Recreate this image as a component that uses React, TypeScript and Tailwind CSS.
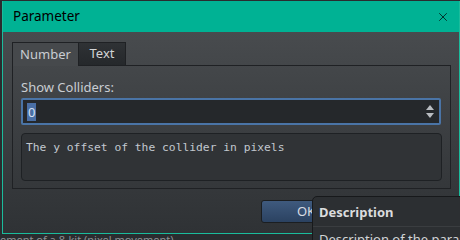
import { X } from 'lucide-react'

const ui = { fontFamily: '"Noto Sans", "Open Sans", sans-serif' }
const mono = { fontFamily: '"DejaVu Sans Mono", "Liberation Mono", monospace' }

export default function App() {
  return (
    <div className="relative w-[460px] h-[240px] overflow-hidden bg-[#2a2c2f]" style={ui}>
      {/* app behind the dialog */}
      <div className="absolute left-0 top-[233px] text-[11px] leading-[14px] text-[#8d9296] whitespace-nowrap">
        ement of a 8-kit (pixel movement)
      </div>

      {/* dialog window */}
      <div className="absolute left-[2px] top-[1px] w-[458px] h-[233px] flex flex-col border-x border-b border-[#1abc9c]">
        <div className="h-[31px] shrink-0 bg-[#00b294] flex items-center justify-between pl-[10px] pr-[9px]">
          <span className="text-[13.5px] text-black">Parameter</span>
          <X className="w-[14px] h-[14px] text-black" strokeWidth={1.2} />
        </div>

        <div className="flex-1 flex flex-col bg-gradient-to-b from-[#484b4e] to-[#2f3235] pt-[10px] pl-[9px] pr-[8px]">
          {/* tabs */}
          <div className="flex h-[24px]">
            <div className="w-[67px] border border-b-0 border-[#1f2124] bg-[#46494c] flex items-center justify-center text-[13px] text-[#c9cdd2]">
              Number
            </div>
            <div className="w-[47px] border border-l-0 border-[#1f2124] bg-gradient-to-b from-[#2f3235] to-[#25282b] flex items-center justify-center text-[13px] text-[#d2d4d6]">
              Text
            </div>
          </div>

          {/* tab pane */}
          <div className="h-[124px] border border-t-0 border-[#1f2124] -mt-px pt-[14px] px-[8px] relative">
            <div className="absolute left-[66px] right-0 top-0 border-t border-[#1f2124]" />
            <div className="text-[13px] leading-[16px] text-[#c9cdd2]">Show Colliders:</div>
            <div className="mt-[3px] h-[27px] w-[420px] border-2 border-[#4a74a6] bg-[#25282b] rounded-[2px] flex items-center justify-between pl-[4px] pr-[5px]">
              <span className="bg-[#4a6fa5] text-[#d6e2f2] text-[13px] leading-[18px] px-[1px]">0</span>
              <div className="flex flex-col gap-[3px] items-center">
                <svg width="8" height="5" viewBox="0 0 8 5"><path d="M0 5 L4 0 L8 5 Z" fill="#b9bdc1" /></svg>
                <svg width="8" height="5" viewBox="0 0 8 5"><path d="M0 0 L4 5 L8 0 Z" fill="#b9bdc1" /></svg>
              </div>
            </div>
            <div className="mt-[8px] h-[48px] w-[421px] border border-[#1e2124] bg-[#303336] rounded-[4px] pl-[4px] pt-[7px] text-[11.3px] leading-[14px] text-[#c2c8cf]" style={mono}>
              The y offset of the collider in pixels
            </div>
          </div>

          {/* buttons */}
          <div className="flex justify-end pt-[11px] pr-[100px]">
            <div className="w-[90px] h-[23px] rounded-[3px] border border-[#1b1e21] bg-gradient-to-b from-[#3f5a7e] to-[#2b4261] flex items-center justify-center text-[13px] text-[#d8dde3]">
              OK
            </div>
          </div>
        </div>
      </div>

      {/* tooltip */}
      <div className="absolute left-[312px] top-[196px] w-[160px] h-[60px] rounded-tl-[5px] border border-[#17191b] bg-[#2c2f32]">
        <div className="h-[30px] border-b border-[#3a3d40] pl-[6px] pt-[6px] text-[13px] leading-[18px] font-bold text-[#dadcde]">
          Description
        </div>
        <div className="pl-[6px] pt-[3px] text-[13px] leading-[18px] text-[#d2d4d6] whitespace-nowrap">
          Description of the parameter
        </div>
      </div>
    </div>
  )
}
